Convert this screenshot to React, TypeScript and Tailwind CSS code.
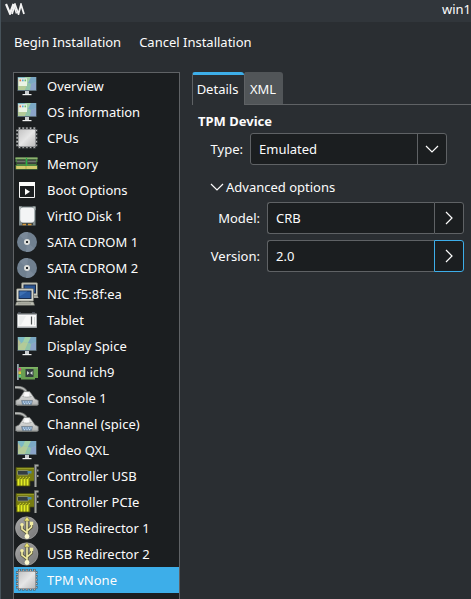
import { useState, type ReactNode } from "react";

function Svg({ children }: { children: ReactNode }) {
  return (
    <svg width="24" height="24" viewBox="0 0 24 24" fill="none" aria-hidden="true" className="shrink-0">
      {children}
    </svg>
  );
}

function Screen() {
  return (
    <>
      <rect x="2.500" y="3" width="19" height="14" fill="#5c6f7a" />
      <rect x="3" y="3" width="18" height="13" fill="#8fc0b4" />
      <path d="M3 3h7L8 9l-5 3z" fill="#7db9c4" />
      <path d="M10 3h6l-3 6-5-1z" fill="#a2d0a6" />
      <path d="M16 3h5v5l-5 2-3-1z" fill="#7ba8c4" />
      <path d="M3 12l5-4 5 1-3 7H3z" fill="#b3cb98" />
      <path d="M13 9l3 1-1 6h-5z" fill="#8fc3a8" />
      <path d="M21 8l-5 2-1 6h6z" fill="#8aa3c8" />
      <path d="M3 5l3 4-3 4z" fill="#b9bf93" />
      <path d="M10 17h4v3h-4z" fill="#c9cdcf" />
      <path d="M7.500 20h9v1.200h-9z" fill="#f1f2f2" />
    </>
  );
}

function DisplayIcon() {
  return <Svg><Screen /></Svg>;
}

function DesktopIcon() {
  return (
    <Svg>
      <Screen />
      <rect x="3.500" y="4" width="8.500" height="8" fill="#e9f3e4" />
      <rect x="3.500" y="4" width="8.500" height="1" fill="#d6e0dd" />
      <rect x="4.500" y="5.500" width="1.600" height="1.800" fill="#e0704e" />
      <rect x="7" y="5.500" width="1.600" height="1.800" fill="#58a5d8" />
      <rect x="9.500" y="5.500" width="1.600" height="1.800" fill="#6cbb66" />
    </Svg>
  );
}

function ChipIcon() {
  return (
    <Svg>
      <defs>
        <linearGradient id="chip" x1="0" y1="0" x2="1" y2="1">
          <stop stopColor="#c4c4c4" />
          <stop offset=".5" stopColor="#e6e6e6" />
          <stop offset="1" stopColor="#bcbcbc" />
        </linearGradient>
      </defs>
      <path
        d="M4.500 1v21.500M8.200 1v21.500M11.900 1v21.500M15.600 1v21.500M19.300 1v21.500M1 4.500h21.500M1 8.200h21.500M1 11.900h21.500M1 15.600h21.500M1 19.300h21.500"
        stroke="#55585a" strokeWidth="2.600"
      />
      <path
        d="M4.500 1.500v20.500M8.200 1.500v20.500M11.900 1.500v20.500M15.600 1.500v20.500M19.300 1.500v20.500M1.500 4.500h20.500M1.500 8.200h20.500M1.500 11.900h20.500M1.500 15.600h20.500M1.500 19.300h20.500"
        stroke="#b9bbbb" strokeWidth="1.100"
      />
      <rect x="3" y="3" width="18" height="18" rx="1" fill="#85878a" />
      <rect x="3.700" y="3.700" width="16.500" height="16.500" rx="1" fill="url(#chip)" />
    </Svg>
  );
}

function MemoryIcon() {
  return (
    <Svg>
      <path d="M.5 5.500h22v12H.5z" fill="#4f8642" />
      <path d="M.5 5.500h22V7H.5z" fill="#8fb070" />
      <path d="M2 7.500h8.500V12H2zM12.500 7.500H21V12h-8.500z" fill="#3b403b" />
      <path d="M2 9.500h8.500M12.500 9.500H21" stroke="#70766f" strokeWidth="1.500" />
      <path d="M1 14h21v3H1z" fill="#c3b95a" />
      <path d="M3 14v3M5 14v3M7 14v3M9 14v3M13 14v3M15 14v3M17 14v3M19 14v3M21 14v3" stroke="#ece58d" strokeWidth=".8" />
      <path d="M11.500 6v8" stroke="#26b247" strokeWidth="1.200" />
      <path d="M0 10h1.500v3H0zM21.500 10H23v3h-1.500z" fill="#1b1e20" />
    </Svg>
  );
}

function BootIcon() {
  return (
    <Svg>
      <path d="M4.500 4.500h15v15h-15z" stroke="#f4f4f4" />
      <path d="M4 4h16v4H4z" fill="#fcfcfc" />
      <path d="M10 10.500v6.500l5-3.250z" fill="#fcfcfc" />
    </Svg>
  );
}

function DiskIcon() {
  return (
    <Svg>
      <rect x="4" y="2.500" width="16.500" height="19" fill="#7e8a8c" />
      <path d="M4 2.500h3l-3 4zM20.500 2.500h-3l3 4z" fill="#b0b8b8" />
      <rect x="5.200" y="3.500" width="14.200" height="15" rx="3" fill="#f3f4f5" />
      <path d="M7 19h11v2.500H7z" fill="#3e4645" />
      <path d="M7.500 20.500h3.500M13 20.500h3.500" stroke="#d99a3d" strokeWidth="1.300" />
    </Svg>
  );
}

function DiscIcon() {
  return (
    <Svg>
      <circle cx="12" cy="12" r="10" fill="#708090" />
      <path d="M12 12 4.500 5.500A10 10 0 0 1 13 2zM12 12l7.500 6.500A10 10 0 0 1 11 22z" fill="#7a8999" />
      <circle cx="12" cy="12" r="3" fill="#dedfdc" />
      <rect x="11" y="11" width="2" height="2" fill="#2b3034" />
    </Svg>
  );
}

function NetworkIcon() {
  return (
    <Svg>
      <rect x="6.500" y=".7" width="16" height="13" rx="1" fill="#c9cabf" stroke="#77786f" strokeWidth=".8" />
      <rect x="9" y="3" width="11.500" height="8" fill="#2a5593" stroke="#1c2b45" />
      <path d="M18 13.500h4.500l1 2.500H18z" fill="#a9aaa2" />
      <rect x="1.500" y="6.700" width="17" height="12.500" rx="1" fill="#d5d6cc" stroke="#6b6c64" strokeWidth=".8" />
      <rect x="4" y="9" width="12" height="7.500" fill="#2a5a9f" stroke="#1a2c4b" />
      <path d="M4.500 9.500h8l-8 5z" fill="#3d70b3" />
      <path d="M6 19h8v1.200H6z" fill="#73746d" />
      <path d="M1.500 20h17l1 3.300H.5z" fill="#bdbeb4" stroke="#77786f" strokeWidth=".5" />
      <path d="M3 21.800h13" stroke="#94958c" />
    </Svg>
  );
}

function TabletIcon() {
  return (
    <Svg>
      <path d="M3 4.500h3M17 4.500h3" stroke="#454b55" />
      <rect x="2" y="5.500" width="20" height="14.500" rx=".7" fill="#a9adb0" />
      <rect x="3" y="7" width="18" height="11.500" fill="#f8f8f8" />
      <path d="M16.500 8.500v8" stroke="#4d5153" strokeWidth="1.200" />
      <path d="M4 8h7l-5 9H4z" fill="#eceeee" />
      <path d="M19.500 9v8" stroke="#d6d9da" />
    </Svg>
  );
}

function SoundIcon() {
  return (
    <Svg>
      <path d="M4 7h19v11h-3v1.500H6V18H4z" fill="#699f52" />
      <path d="M4 7h19v1.500H4z" fill="#80b467" />
      <path d="M2 4h1.800v16H2z" fill="#95a6ad" />
      <path d="M3.500 8h2.500v2.500H3.500z" fill="#d7467a" />
      <path d="M3.500 11.500h2.500V14H3.500z" fill="#e5c33c" />
      <path d="M3.500 15h2.500v2H3.500z" fill="#59cb80" />
      <rect x="10.500" y="9" width="8" height="8" fill="#333c40" />
      <path d="M12 11v4l2.500-2zM17.500 11v4L15 13z" fill="#d5dbdb" />
    </Svg>
  );
}

function SerialIcon() {
  return (
    <Svg>
      <defs>
        <linearGradient id="plug" x1="0" y1="0" x2="0" y2="1">
          <stop stopColor="#f0f0ef" />
          <stop offset="1" stopColor="#aeb0af" />
        </linearGradient>
      </defs>
      <path d="M0 1.500c6-.5 10 1 11.500 5" stroke="#6b6e6c" strokeWidth="3" />
      <path d="M0 1.300c6-.5 10 1 11.500 5" stroke="#b9bbb9" strokeWidth="1.500" />
      <path d="M9 5.500h5.500l2 2.500 3.500 5 3.200 1.500v4.500H.8v-4.500L4 13l3.500-5z" fill="url(#plug)" stroke="#7b7e7c" strokeWidth=".7" />
      <path d="M10 6.500h3.500l1 5h-6z" fill="#fafafa" />
      <path d="M7.500 10.500c2 1 6.500 1 9 0" stroke="#a5a7a6" />
      <path d="M2 19.500h20.500" stroke="#6f7270" />
      <path d="M6.500 14.500h11l-1 4H7.500z" fill="#7c9dbf" stroke="#5c6872" strokeWidth=".5" />
      <path d="M8 16h1M10.500 16h1M13 16h1M15.500 16h1M9 17.700h1M11.500 17.700h1M14 17.700h1" stroke="#dce7f0" />
    </Svg>
  );
}

function CardIcon() {
  return (
    <Svg>
      <path d="M1 3.500h19v13.500h-5v5H1.500v-5H1z" fill="#777c12" stroke="#4d5110" strokeWidth=".7" />
      <path d="M2 4.500h17" stroke="#969b28" />
      <rect x="2.500" y="6.500" width="11" height="4.500" rx="1" fill="#333d42" stroke="#abb088" strokeWidth=".6" />
      <path d="M12.500 7h4v2.500h-4z" fill="#4e87aa" />
      <path d="M3.500 15v6.500M6.500 15v6.500M9.500 15v6.500M12.500 15v6.500" stroke="#e3ed24" strokeWidth="1.900" />
      <path d="M3.500 15l2.500-2M6.500 15l2.500-2M9.500 15l2.500-2M12.500 15l2.500-2" stroke="#c6cf22" />
      <path d="M23.500 1.500h-3V23" stroke="#4e514e" strokeWidth="3" />
      <path d="M23.500 1.500h-3V23" stroke="#a3a6a3" strokeWidth="1.500" />
      <path d="M22 6.500h1.500M22 12h1.500" stroke="#9b9e9b" strokeWidth="2" />
    </Svg>
  );
}

function UsbIcon() {
  return (
    <Svg>
      <defs>
        <linearGradient id="usb" x1="0" y1="0" x2="1" y2="1">
          <stop stopColor="#a8a8a8" />
          <stop offset=".5" stopColor="#8d8d8d" />
          <stop offset="1" stopColor="#777" />
        </linearGradient>
      </defs>
      <circle cx="11.700" cy="12" r="11.200" fill="url(#usb)" stroke="#aaa" strokeWidth=".6" />
      <path d="M12 3v18M12 17l-5-4V9M12 15l4.500-4V7" stroke="#5b5b42" strokeWidth="3.200" />
      <path d="M12 3v18M12 17l-5-4V9M12 15l4.500-4V7" stroke="#f3eda2" strokeWidth="1.600" />
      <path d="M12 .5 9 5h6z" fill="#f3ea79" stroke="#66653a" strokeWidth=".5" />
      <circle cx="7" cy="8.700" r="1.800" fill="#f3eda2" />
      <path d="M15 5.700h3.200V9H15z" fill="#f3eda2" />
      <circle cx="12" cy="20.500" r="2.400" fill="#fbf8cf" />
    </Svg>
  );
}

const devices = [
  { name: "Overview", Icon: DesktopIcon },
  { name: "OS information", Icon: DesktopIcon },
  { name: "CPUs", Icon: ChipIcon },
  { name: "Memory", Icon: MemoryIcon },
  { name: "Boot Options", Icon: BootIcon },
  { name: "VirtIO Disk 1", Icon: DiskIcon },
  { name: "SATA CDROM 1", Icon: DiscIcon },
  { name: "SATA CDROM 2", Icon: DiscIcon },
  { name: "NIC :f5:8f:ea", Icon: NetworkIcon },
  { name: "Tablet", Icon: TabletIcon },
  { name: "Display Spice", Icon: DisplayIcon },
  { name: "Sound ich9", Icon: SoundIcon },
  { name: "Console 1", Icon: SerialIcon },
  { name: "Channel (spice)", Icon: SerialIcon },
  { name: "Video QXL", Icon: DisplayIcon },
  { name: "Controller USB", Icon: CardIcon },
  { name: "Controller PCIe", Icon: CardIcon },
  { name: "USB Redirector 1", Icon: UsbIcon },
  { name: "USB Redirector 2", Icon: UsbIcon },
  { name: "TPM vNone", Icon: ChipIcon },
];

function Chevron({ right = false }: { right?: boolean }) {
  return (
    <svg width="14" height="14" viewBox="0 0 14 14" fill="none" stroke="#fcfcfc" strokeWidth="1.200" aria-hidden="true" className="shrink-0">
      <path d={right ? "M4 1l6 6-6 6" : "M1 4l6 6 6-6"} />
    </svg>
  );
}

function ComboEntry({ id, label, value, active = false }: { id: string; label: string; value: string; active?: boolean }) {
  return (
    <div className="flex items-center gap-[7px]">
      <label htmlFor={id} className="w-[50px] shrink-0 text-right">{label}</label>
      <div className="flex h-8">
        <input
          id={id}
          defaultValue={value}
          className="w-[167px] rounded-l-[3px] border border-r-0 border-[#5f6265] bg-[#1b1e20] px-2 outline-none"
        />
        <button
          type="button"
          aria-label={`Choose ${label}`}
          className={`flex w-[30px] items-center justify-center rounded-r-[3px] border bg-[#1b1e20] ${active ? "border-[#3daee9]" : "border-[#5f6265]"}`}
        >
          <Chevron right />
        </button>
      </div>
    </div>
  );
}

export default function App() {
  const [selected, setSelected] = useState("TPM vNone");

  return (
    <div className="flex min-h-screen flex-col overflow-hidden border-l border-[#46525a] bg-[#2a2e32] font-['Noto_Sans',sans-serif] text-[13px] leading-[18px] text-[#fcfcfc]">
      <header className="flex h-[22px] items-center justify-between bg-[#31363b] pb-1 pl-1">
        <svg width="20" height="12" viewBox="0 0 20 12" fill="none" stroke="#f4f4f4" aria-hidden="true">
          <path d="M1 1l4 9.500L8.500 1" strokeWidth="2.200" />
          <path d="M7 11l3-9.500L13.500 11 16 1.500 19 11" strokeWidth="1.800" />
          <path d="M8.500 1l3 9.500" strokeWidth="1.500" />
        </svg>
        <h1>win1</h1>
      </header>

      <nav className="flex h-[50px] items-center gap-[18px] pb-[10px] pl-[13px]">
        <button type="button">Begin Installation</button>
        <button type="button">Cancel Installation</button>
      </nav>

      <main className="flex grow gap-3 pl-3">
        <ul className="w-[167px] shrink-0 border border-b-0 border-[#5f6265] bg-[#1b1e20]">
          {devices.map(({ name, Icon }) => (
            <li key={name}>
              <button
                type="button"
                onClick={() => setSelected(name)}
                className={`flex h-[26px] w-full items-center gap-2 pl-px text-left ${selected === name ? "bg-[#3daee9]" : ""}`}
              >
                <Icon />
                {name}
              </button>
            </li>
          ))}
        </ul>

        <section className="min-w-0 grow">
          <div role="tablist" className="flex h-[33px]">
            <button type="button" role="tab" aria-selected="true" className="w-[52px] rounded-t-[3px] border-t-3 border-l border-t-[#3daee9] border-l-[#5f6265] pr-[2px] pb-[2px]">
              Details
            </button>
            <button type="button" role="tab" aria-selected="false" className="w-[39px] rounded-t-[3px] border-b border-l border-[#5f6265] bg-[#515558] pt-[2px] pr-[2px]">
              XML
            </button>
            <div className="grow border-b border-[#5f6265]" />
          </div>

          <form className="pt-[7px] pl-[6px]">
            <h2 className="font-bold">TPM Device</h2>
            <div className="pt-[3px] pl-3">
              <div className="flex items-center gap-[7px]">
                <label htmlFor="type" className="w-[33px] shrink-0 text-right">Type:</label>
                <div className="relative h-8 w-[197px]">
                  <select id="type" className="h-full w-full appearance-none rounded-[3px] border border-[#5f6265] bg-[#1b1e20] px-2 outline-none">
                    <option>Emulated</option>
                  </select>
                  <span className="pointer-events-none absolute inset-y-px right-px flex w-[29px] items-center justify-center border-l border-[#5f6265]">
                    <Chevron />
                  </span>
                </div>
              </div>
              <button type="button" aria-expanded="true" className="mt-[13px] mb-[6px] flex items-center gap-[2px]">
                <Chevron />
                Advanced options
              </button>
              <div className="flex flex-col gap-[6px]">
                <ComboEntry id="model" label="Model:" value="CRB" />
                <ComboEntry id="version" label="Version:" value="2.0" active />
              </div>
            </div>
          </form>
        </section>
      </main>
    </div>
  );
}
